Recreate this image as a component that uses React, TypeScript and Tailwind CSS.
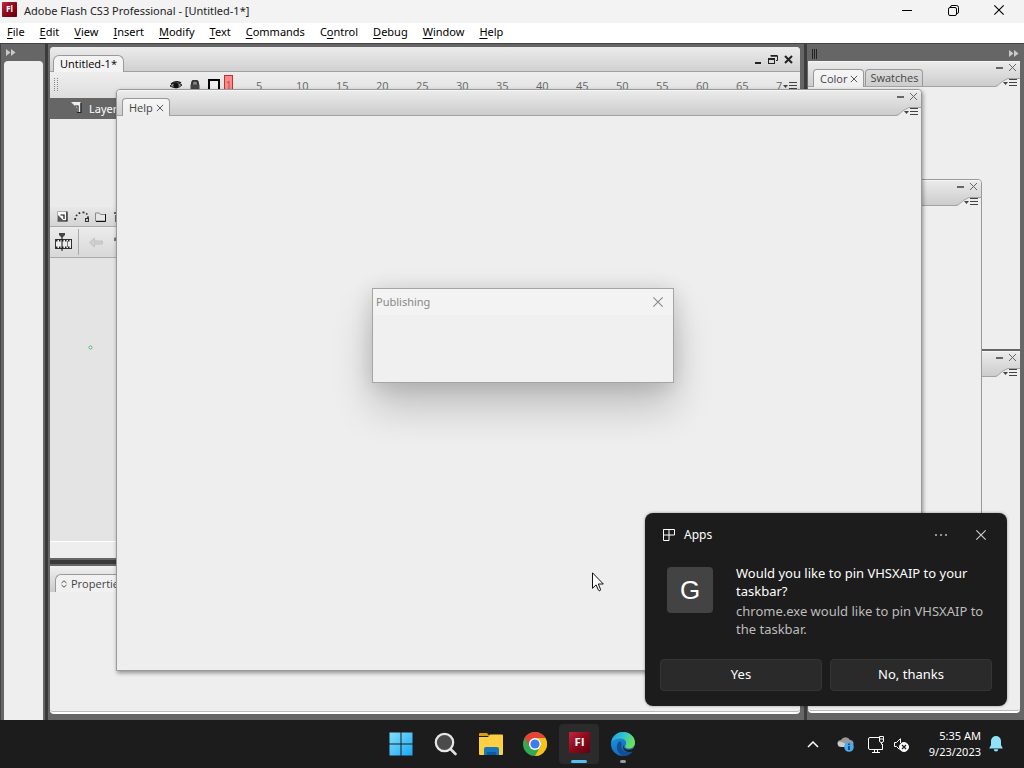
import type { ReactNode } from 'react';

const MENUS: { label: string; key: number }[] = [
  { label: 'File', key: 0 },
  { label: 'Edit', key: 0 },
  { label: 'View', key: 0 },
  { label: 'Insert', key: 0 },
  { label: 'Modify', key: 0 },
  { label: 'Text', key: 0 },
  { label: 'Commands', key: 0 },
  { label: 'Control', key: 1 },
  { label: 'Debug', key: 0 },
  { label: 'Window', key: 0 },
  { label: 'Help', key: 0 },
];

const FRAMES = [5, 10, 15, 20, 25, 30, 35, 40, 45, 50, 55, 60, 65];

function FlashIcon({ size }: { size: number }) {
  return (
    <svg width={size} height={size} viewBox="0 0 22 22" aria-hidden="true">
      <defs>
        <linearGradient id={`flash${size}`} x1="0" y1="0" x2="1" y2="1">
          <stop offset="0" stopColor="#c4263a" />
          <stop offset="0.5" stopColor="#8c0a1c" />
          <stop offset="1" stopColor="#63000d" />
        </linearGradient>
      </defs>
      <rect width="22" height="22" rx="1" fill={`url(#flash${size})`} />
      <text x="11" y="15" textAnchor="middle" fontSize="12" fontWeight="700" fill="#fff" fontFamily="Open Sans, sans-serif">
        Fl
      </text>
    </svg>
  );
}

function CloseGlyph({ size = 9, width = 1 }: { size?: number; width?: number }) {
  return (
    <svg width={size} height={size} viewBox="0 0 9 9" fill="none" stroke="currentColor" strokeWidth={width} aria-hidden="true">
      <path d="M1 1l7 7M8 1l-7 7" />
    </svg>
  );
}

function DoubleArrow() {
  return (
    <svg width="10" height="7" viewBox="0 0 10 7" fill="#c9c9c9" aria-hidden="true">
      <path d="M0 0l4.500 3.500L0 7zM5 0l4.500 3.500L5 7z" />
    </svg>
  );
}

function MenuGlyph() {
  return (
    <svg width="14" height="9" viewBox="0 0 14 9" aria-hidden="true">
      <path d="M0 4h5L2.500 7z" fill="#444" />
      <path d="M6 1.500h8M6 4.500h8M6 7.500h8" stroke="#444" />
    </svg>
  );
}

function PanelHeader({ children }: { children?: ReactNode }) {
  return (
    <header className="flex h-[26px] shrink-0 items-end justify-between rounded-t-sm bg-linear-to-b from-[#ececec] to-[#cbcbcb] shadow-[inset_0_1px_0_#f6f6f6,inset_0_-1px_0_#a3a3a3]">
      <div className="flex items-end">{children}</div>
      <div className="flex h-full w-8 flex-col items-end justify-between text-[#666]">
        <div className="flex items-center gap-1 pt-[2px] pr-[3px]">
          <button aria-label="Minimize panel" className="flex h-[9px] w-[9px] items-end justify-center pb-[3px]">
            <span className="h-[2px] w-[7px] bg-[#666]" />
          </button>
          <button aria-label="Close panel">
            <CloseGlyph />
          </button>
        </div>
        <button aria-label="Panel menu" className="relative flex h-[9px] w-full items-end justify-end pr-[3px]">
          <svg className="absolute inset-0" width="32" height="10" viewBox="0 0 32 10" aria-hidden="true">
            <path d="M7 9Q10 8 12 5.500T20 .5H32V10H7z" fill="#eee" />
            <path d="M7 8.500Q10 8 12 5.500T20 .5H32" fill="none" stroke="#a3a3a3" />
          </svg>
          <span className="relative">
            <MenuGlyph />
          </span>
        </button>
      </div>
    </header>
  );
}

function Tab({ label, closable, active }: { label: string; closable?: boolean; active?: boolean }) {
  return (
    <div
      className={
        active
          ? 'flex h-[18px] items-center gap-[3px] rounded-t border border-b-0 border-[#999] bg-linear-to-b from-[#f6f6f6] to-[#eee] pt-px pr-[5px] pl-[6px] text-[11px] text-[#444]'
          : 'mb-px flex h-[17px] items-center rounded-t border border-b-0 border-[#999] bg-linear-to-b from-[#dcdcdc] to-[#cdcdcd] px-1 pt-px text-[11px] text-[#444]'
      }
    >
      <button>{label}</button>
      {closable && (
        <button aria-label={`Close ${label}`}>
          <CloseGlyph size={8} />
        </button>
      )}
    </div>
  );
}

function TitleBar() {
  return (
    <header className="flex h-[23px] shrink-0 items-center justify-between bg-[#f3f3f3] pr-[2px] pl-[2px] text-[#222]">
      <div className="flex items-center gap-[7px]">
        <span className="-mt-1">
          <FlashIcon size={15} />
        </span>
        <h1 className="font-['Noto_Sans',sans-serif] text-[11px]">Adobe Flash CS3 Professional - [Untitled-1*]</h1>
      </div>
      <div className="flex h-full items-center pb-[3px] text-black">
        <button aria-label="Minimize" className="flex w-[46px] justify-center">
          <svg width="10" height="10" viewBox="0 0 10 10" stroke="currentColor"><path d="M0 5.500h10" /></svg>
        </button>
        <button aria-label="Restore" className="flex w-[46px] justify-center">
          <svg width="11" height="11" viewBox="0 0 11 11" fill="none" stroke="currentColor">
            <rect x=".5" y="2.500" width="8" height="8" rx="1.500" />
            <path d="M2.500 2.500V2Q2.500.5 4 .5h4.500q2 0 2 2V7q0 1.500-1.500 1.500" />
          </svg>
        </button>
        <button aria-label="Close" className="flex w-[46px] justify-center">
          <CloseGlyph size={12} width={0.85} />
        </button>
      </div>
    </header>
  );
}

function MenuBar() {
  return (
    <nav aria-label="Application menu" className="flex h-5 shrink-0 items-center gap-px bg-white pb-px font-['Noto_Sans',sans-serif]">
      {MENUS.map(({ label, key }) => (
        <button key={label} className="px-[7px] text-[11px] text-black">
          {label.slice(0, key)}
          <span className="underline underline-offset-2">{label[key]}</span>
          {label.slice(key + 1)}
        </button>
      ))}
    </nav>
  );
}

function DocumentWindow() {
  return (
    <section aria-label="Untitled-1" className="flex flex-1 flex-col overflow-hidden rounded-t-sm bg-[#ececec]">
      <header className="flex h-[25px] shrink-0 items-end justify-between bg-linear-to-b from-[#ececec] to-[#cfcfcf] pr-[7px] pl-[3px] shadow-[inset_0_-1px_0_#a0a0a0]">
        <button className="h-[17px] rounded-t-md border border-b-0 border-[#999] bg-[#f3f3f3] px-[6px] text-[11px] leading-4 text-black">
          Untitled-1*
        </button>
        <div className="flex items-center gap-[6px] self-center text-[#222]">
          <button aria-label="Minimize document" className="flex h-[9px] w-[7px] items-end">
            <span className="h-[2px] w-[6px] bg-[#222]" />
          </button>
          <button aria-label="Restore document">
            <svg width="10" height="9" viewBox="0 0 10 9" fill="none" stroke="currentColor">
              <path d="M3 1h6.500v4.500H8" /><path d="M2.500.5h7" strokeWidth="2" />
              <rect x=".5" y="4" width="6" height="4.500" /><path d="M0 4h7" strokeWidth="2" />
            </svg>
          </button>
          <button aria-label="Close document"><CloseGlyph width={2} /></button>
        </div>
      </header>

      <div className="flex h-[26px] shrink-0 items-center bg-linear-to-b from-[#eee] to-[#dedede] pl-1">
        <svg width="5" height="14" viewBox="0 0 5 14" stroke="#888" strokeDasharray="1 1" aria-hidden="true">
          <path d="M.5 0v14M3.500 0v14" />
        </svg>
        <div className="ml-[111px] flex items-center gap-2">
          <svg width="12" height="9" viewBox="0 0 12 9" aria-label="Show or hide layers">
            <path d="M0 5Q5-1 12 4Q7 9 0 5z" fill="#999" stroke="#222" />
            <circle cx="6" cy="4.500" r="2.700" fill="#111" />
            <path d="M1 3Q6-1 11 2" fill="none" stroke="#222" strokeWidth="1.500" />
          </svg>
          <svg width="10" height="10" viewBox="0 0 10 10" aria-label="Lock layers">
            <path d="M2 5V3.500a3 3 0 016 0V5" fill="#888" stroke="#333" strokeWidth="2" />
            <rect x=".5" y="4.500" width="9" height="5.500" fill="#444" />
          </svg>
          <svg width="12" height="12" viewBox="0 0 12 12" aria-label="Show outlines">
            <rect x="1" y="1" width="10" height="10" fill="#eee" stroke="#000" strokeWidth="2" />
          </svg>
        </div>
        <div className="ml-[4px] h-5 w-[9px] shrink-0 border border-[#b33] bg-[#f88] pt-[2px] text-center text-[10px] leading-[14px] text-[#955]">1</div>
        <div className="ml-[23px] flex min-w-0 flex-1 pt-[2px] text-[11px] text-[#666]">
          {FRAMES.map((n) => (
            <span key={n} className="w-10 shrink-0">{n}</span>
          ))}
          <span>7</span>
        </div>
        <button aria-label="Timeline menu" className="pr-[3px]"><MenuGlyph /></button>
      </div>

      <div className="flex h-[21px] shrink-0 items-center gap-[7px] bg-[#666] pt-[2px] pl-[21px] font-['Noto_Sans',sans-serif] text-[11px] text-white">
        <svg width="11" height="11" viewBox="0 0 11 11" aria-hidden="true" className="mb-1">
          <path d="M0 0h9.500v10H6V6z" fill="#eee" />
          <path d="M4 4h3v6M10 1v9.500H6" fill="none" stroke="#222" strokeWidth="1.200" />
        </svg>
        <span>Layer 1</span>
      </div>
      <div className="h-[88px] shrink-0 bg-[#ebebeb]" />

      <div className="flex h-5 shrink-0 items-center gap-[6px] border-b border-[#aaa] bg-linear-to-b from-[#e8e8e8] to-[#d4d4d4] pl-[7px]">
        <button aria-label="Insert layer">
          <svg width="11" height="11" viewBox="0 0 11 11">
            <path d="M.5.5h9v9h-9z" fill="#fafafa" stroke="#aaa" />
            <path d="M10 .5V10H.5M3.500 4H7v4" fill="none" stroke="#111" strokeWidth="1.200" />
            <path d="M1 4l5 5H1z" fill="#555" />
          </svg>
        </button>
        <button aria-label="Add motion guide">
          <svg width="16" height="12" viewBox="0 0 16 12" fill="none" stroke="#333">
            <path d="M1 9Q2 2 8 1.500T14 7" strokeWidth="1.800" strokeDasharray="1.800 2" />
            <rect x="11.500" y="7.500" width="3" height="3" fill="#ccc" />
          </svg>
        </button>
        <button aria-label="Insert layer folder" className="-ml-px">
          <svg width="11" height="10" viewBox="0 0 11 10">
            <path d="M.5 1h4l1 1.500h5V9H.5z" fill="#e6e6e6" stroke="#888" />
            <path d="M10.500 2v7.500H1" fill="none" stroke="#111" />
          </svg>
        </button>
        <button aria-label="Delete layer" className="pl-[2px]">
          <svg width="9" height="11" viewBox="0 0 9 11" fill="#666"><path d="M0 1h9v2H0zM1 4h7v7H1z" /></svg>
        </button>
      </div>
      <div className="flex h-[31px] shrink-0 items-center border-b border-[#aaa] bg-linear-to-b from-[#ececec] to-[#d8d8d8] pl-[5px]">
        <button aria-label="Timeline">
          <svg width="18" height="19" viewBox="0 0 18 19">
            <rect x=".5" y="6.500" width="16" height="9" fill="#eee" stroke="#333" />
            <path d="M1 7.500h16M1 14.500h16" stroke="#222" strokeWidth="2" strokeDasharray="1.500 1.500" />
            <path d="M7 1v17" stroke="#111" />
            <path d="M12.500 8v6" stroke="#777" />
            <path d="M4 0h6v2L7 5 4 2z" fill="#444" />
          </svg>
        </button>
        <span className="ml-[5px] h-[26px] w-px bg-[#aaa]" />
        <button aria-label="Back" className="ml-[10px]">
          <svg width="14" height="11" viewBox="0 0 14 11"><path d="M.5 5.500L5.500 1v3h8v3h-8v3z" fill="#d0d0d0" stroke="#c2c2c2" /></svg>
        </button>
        <svg width="12" height="13" viewBox="0 0 12 13" className="ml-[11px]" aria-hidden="true"><path d="M0 2l5-2 7 2v11H2V5H0z" fill="#777" /></svg>
      </div>
      <div className="flex flex-1 items-start bg-[#e4e4e4] pt-[87px] pl-[38px]">
        <svg width="5" height="5" viewBox="0 0 5 5" aria-hidden="true"><circle cx="2.500" cy="2.500" r="1.500" fill="#fff" stroke="#4fae66" /></svg>
      </div>
      <div className="h-[17px] shrink-0 border-t border-white bg-[#eee]" />
    </section>
  );
}

function PropertiesPanel() {
  return (
    <section aria-label="Properties" className="h-[148px] shrink-0 rounded-sm border-b-2 border-white bg-[#eee] shadow-[inset_0_-1px_0_#bbb]">
      <div className="flex h-[26px] items-end bg-linear-to-b from-[#f0f0f0] to-[#cbcbcb] pl-[5px]">
        <button className="flex h-[18px] items-center gap-1 rounded-tl-md border border-r-0 border-b-0 border-[#999] bg-[#f1f1f1] pt-px pl-[5px] text-[11px] text-[#444]">
          <svg width="6" height="8" viewBox="0 0 6 8" fill="none" stroke="#555" aria-hidden="true"><path d="M.5 3L3 .8 5.500 3M.5 5L3 7.200 5.500 5" /></svg>
          Properties
        </button>
        <div className="h-[18px] flex-1 bg-[#f1f1f1]" />
      </div>
    </section>
  );
}

function RightDock() {
  return (
    <aside className="flex w-[220px] shrink-0 flex-col border-l-[3px] border-[#3d3d3d] bg-[#666] pt-[2px] pr-1 pb-[7px] pl-px">
      <div className="flex h-[15px] shrink-0 items-center justify-between pl-1">
        <svg width="6" height="10" viewBox="0 0 6 10" stroke="#222" aria-hidden="true"><path d="M.5 0v10M2.500 0v10M4.500 0v10" /></svg>
        <button aria-label="Collapse dock" className="pr-px"><DoubleArrow /></button>
      </div>
      <section className="h-[288px] shrink-0 bg-[#eee]">
        <PanelHeader>
          <div className="flex items-end gap-px pl-[5px]">
            <Tab label="Color" closable active />
            <Tab label="Swatches" />
          </div>
        </PanelHeader>
      </section>
      <section className="mt-[2px] flex-1 rounded-b border-b-2 border-white bg-[#eee] shadow-[inset_0_-1px_0_#bbb]">
        <PanelHeader />
      </section>
    </aside>
  );
}

function PinToast() {
  return (
    <div role="dialog" aria-label="Apps notification" className="absolute right-[17px] bottom-[62px] w-[362px] rounded-lg bg-[#1c1c1c] px-[15px] pt-[10px] pb-[15px] font-['Noto_Sans',sans-serif] text-white shadow-[0_0_3px_#0006]">
      <div className="flex h-6 items-center">
        <svg width="12" height="12" viewBox="0 0 12 12" fill="none" stroke="#fff" className="ml-[3px]" aria-hidden="true">
          <path d="M.5.5h11v5.500H.5zM.5.5v11H6V.5" />
        </svg>
        <span className="ml-[9px] flex-1 text-[12px]">Apps</span>
        <button aria-label="More options" className="mr-[28px] flex gap-[3px]">
          <span className="size-[2px] rounded-full bg-[#bbb]" />
          <span className="size-[2px] rounded-full bg-[#bbb]" />
          <span className="size-[2px] rounded-full bg-[#bbb]" />
        </button>
        <button aria-label="Dismiss" className="mr-[5px] text-[#ccc]"><CloseGlyph size={12} width={0.9} /></button>
      </div>
      <div className="mt-[17px] flex items-start gap-[23px] pl-[7px]">
        <div className="mt-[3px] flex size-[46px] shrink-0 items-center justify-center rounded bg-[#434343] font-['Liberation_Sans',sans-serif] text-[26px]">G</div>
        <div className="text-[13px] leading-[18px] whitespace-nowrap">
          <p>Would you like to pin VHSXAIP to your<br />taskbar?</p>
          <p className="mt-[2px] text-[#bdbdbd]">chrome.exe would like to pin VHSXAIP to<br />the taskbar.</p>
        </div>
      </div>
      <div className="mt-[21px] grid grid-cols-2 gap-2 text-[13px]">
        <button className="h-8 rounded border border-[#353535] bg-[#2a2a2a]">Yes</button>
        <button className="h-8 rounded border border-[#353535] bg-[#2a2a2a]">No, thanks</button>
      </div>
    </div>
  );
}

function Taskbar() {
  return (
    <footer className="grid h-12 shrink-0 grid-cols-[1fr_auto_1fr] items-center bg-[#1c1c1c] text-white">
      <span />
      <div className="flex h-full items-center">
        <button aria-label="Start" className="flex w-11 justify-center">
          <svg width="24" height="24" viewBox="0 0 24 24">
            <defs><linearGradient id="win" x2="1" y2="1"><stop stopColor="#83e1fb" /><stop offset="1" stopColor="#1aa7f4" /></linearGradient></defs>
            <path d="M.5.5h11v11H.5zM12.500.5h11v11h-11zM.5 12.500h11v11H.5zM12.500 12.500h11v11h-11z" fill="url(#win)" />
          </svg>
        </button>
        <button aria-label="Search" className="flex w-[46px] justify-center">
          <svg width="24" height="24" viewBox="0 0 24 24">
            <path d="M16.500 17l5 5" stroke="#ddd" strokeWidth="2.600" strokeLinecap="round" />
            <circle cx="10.500" cy="10.500" r="8.700" fill="#4b4b4b" stroke="#e6e6e6" strokeWidth="2.200" />
          </svg>
        </button>
        <button aria-label="File Explorer" className="flex w-11 justify-center">
          <svg width="24" height="24" viewBox="0 0 24 24">
            <path d="M0 2q0-1 1-1h7l2.500 3H0z" fill="#d99c18" />
            <path d="M0 5h9l2-2.500h12q1 0 1 1V22q0 1-1 1H1q-1 0-1-1z" fill="#fdcf43" />
            <path d="M5 23v-6q0-2 2-2h11q2 0 2 2v6z" fill="#1675bd" />
            <path d="M8 20h9v3H8z" fill="#0e5b9c" />
          </svg>
        </button>
        <button aria-label="Chrome" className="flex w-11 justify-center">
          <svg width="24" height="24" viewBox="0 0 24 24">
            <circle cx="12" cy="12" r="12" fill="#34a853" />
            <path d="M1.600 6A12 12 0 0122.400 6H12a6 6 0 00-5.200 9z" fill="#ea4335" />
            <path d="M22.400 6A12 12 0 0112 24l5.200-9A6 6 0 0012 6z" fill="#fbc116" />
            <circle cx="12" cy="12" r="6" fill="#fff" /><circle cx="12" cy="12" r="4.600" fill="#3b7ded" />
          </svg>
        </button>
        <button aria-label="Adobe Flash CS3" className="mx-[2px] flex h-10 w-10 flex-col items-center justify-between rounded bg-[#2b2b2b] pt-2 pb-px">
          <FlashIcon size={21} />
          <span className="h-[3px] w-4 rounded-full bg-[#56bdf0]" />
        </button>
        <button aria-label="Edge" className="flex h-10 w-11 flex-col items-center justify-between pt-2 pb-px">
          <svg width="24" height="24" viewBox="0 0 24 24">
            <defs>
              <linearGradient id="edgeTop" x2="1" y2=".4"><stop stopColor="#239fe0" /><stop offset=".5" stopColor="#2fc1d3" /><stop offset="1" stopColor="#6be05c" /></linearGradient>
              <linearGradient id="edgeSide" x2=".7" y2="1"><stop stopColor="#1e9be0" /><stop offset="1" stopColor="#1062b8" /></linearGradient>
            </defs>
            <circle cx="12" cy="12" r="12" fill="url(#edgeSide)" />
            <path d="M.3 10C2 3 7 0 12 0c7 0 12 5 12 10.500 0 4-3 6-6.500 6-3 0-4-1.500-3-3 2-4-1-7-5-7C5 6.500 1.500 8.500.3 10z" fill="url(#edgeTop)" />
            <path d="M13 12c-2 5 4 7.500 9.500 4.500L24 13v5l-3 2c-6 1-11-3-8-8z" fill="#1c1c1c" />
            <path d="M9 9c-5 3-4 12 3 15 4 0 7-1 9.500-4.500C14.500 22 9 17 10.500 12.500q.5-2-1.500-3.500z" fill="#124e91" />
          </svg>
          <span className="h-[3px] w-[6px] rounded-full bg-[#9a9a9a]" />
        </button>
      </div>
      <div className="flex items-center justify-end pr-[21px]">
        <button aria-label="Show hidden icons" className="mr-[18px]">
          <svg width="12" height="7" viewBox="0 0 12 7" fill="none" stroke="#fff" strokeWidth="1.500"><path d="M1 6l5-5 5 5" /></svg>
        </button>
        <button aria-label="OneDrive" className="mr-[14px]">
          <svg width="17" height="15" viewBox="0 0 17 15">
            <path d="M4 10a3.500 3.500 0 010-7 5 5 0 019 0 3.500 3.500 0 010 7z" fill="#999" />
            <path d="M1 5q5-1 11 5H4Q0 9 1 5z" fill="#ccc" />
            <circle cx="12" cy="10" r="4.800" fill="#4ba9ed" /><path d="M12 9v4M12 6.500v1.500" stroke="#103e66" strokeWidth="1.600" />
          </svg>
        </button>
        <button aria-label="Network" className="mr-[9px]">
          <svg width="17" height="17" viewBox="0 0 17 17" fill="none" stroke="#fff">
            <path d="M11 1.500H2q-1.500 0-1.500 1.500v9q0 1.500 1.500 1.500h12.500V8M4 16.500h8M6.500 13.500v3M9.500 13.500v3M11.500.500h4V5q0 1.500-2 1.500T11.500 5zM11.500 3h4M13.500 6.500v2" />
          </svg>
        </button>
        <button aria-label="Volume muted" className="mr-5">
          <svg width="15" height="15" viewBox="0 0 15 15" fill="none" stroke="#fff">
            <path d="M6.500 2v4M.5 5.500h2L6.500 1.500M.5 5.500v4h2l3 3" />
            <circle cx="10" cy="10" r="4.500" fill="#fff" /><path d="M8 8l4 4M12 8l-4 4" stroke="#222" strokeWidth="1.300" />
          </svg>
        </button>
        <button className="text-right font-['Noto_Sans',sans-serif] text-[11px] leading-4 whitespace-nowrap">5:35 AM<br />9/23/2023</button>
        <button aria-label="Notifications" className="ml-2">
          <svg width="14" height="16" viewBox="0 0 14 16" fill="#8fe3fb">
            <path d="M7 0a5 5 0 015 5v4l1.800 3.500H.2L2 9V5a5 5 0 015-5zM4.800 13.300h4.400a2.200 2.200 0 01-4.400 0z" />
          </svg>
        </button>
      </div>
    </footer>
  );
}

export default function App() {
  return (
    <div className="relative flex min-h-screen flex-col overflow-hidden bg-[#666] font-['Open_Sans','Noto_Sans',sans-serif] select-none">
      <TitleBar />
      <MenuBar />
      <main className="flex flex-1 border-t border-[#444]">
        <aside className="flex w-[48px] shrink-0 flex-col border-r-[3px] border-l border-r-[#3a3a3a] border-l-[#444] bg-[#666] pr-[2px] pl-[3px]">
          <div className="flex h-[17px] shrink-0 items-center pl-[2px]">
            <button aria-label="Expand tools"><DoubleArrow /></button>
          </div>
          <div className="flex-1 rounded-t-sm bg-[#eee]" />
        </aside>
        <div className="flex min-w-0 flex-1 flex-col pt-[3px] pr-1 pb-[6px] pl-[2px]">
          <DocumentWindow />
          <div className="my-[2px] h-1 shrink-0 bg-[#3a3a3a]" />
          <PropertiesPanel />
        </div>
        <RightDock />
      </main>
      <Taskbar />

      <section aria-label="Panel" className="absolute top-[179px] right-[42px] h-[480px] w-[300px] rounded-t border border-[#999] bg-[#eee]">
        <PanelHeader />
      </section>
      <section aria-label="Help" className="absolute top-[89px] right-[102px] bottom-[97px] left-[116px] rounded-t border border-[#999] bg-[#eee] shadow-[1px_2px_4px_#0006]">
        <PanelHeader>
          <div className="pl-[5px]"><Tab label="Help" closable active /></div>
        </PanelHeader>
      </section>

      <div role="dialog" aria-label="Publishing" className="absolute top-[288px] left-[372px] h-[95px] w-[302px] border border-[#a5a5a5] bg-[#f0f0f0] shadow-[0_24px_40px_#0003,0_2px_20px_#0002]">
        <div className="flex h-[26px] items-center justify-between bg-[#f3f3f3] pr-[9px] pl-[3px] font-['Noto_Sans',sans-serif] text-[11px] text-[#888]">
          <h2>Publishing</h2>
          <button aria-label="Close dialog"><CloseGlyph size={12} width={0.8} /></button>
        </div>
      </div>

      <PinToast />

      <svg className="pointer-events-none absolute top-[572px] left-[592px]" width="12" height="20" viewBox="0 0 12 20" aria-hidden="true">
        <path d="M.5.8v15.500l3.600-3.400 2.300 5.200q.5 1 1.500.6t.6-1.400L6.300 12h5z" fill="#fff" stroke="#111" />
      </svg>
    </div>
  );
}
